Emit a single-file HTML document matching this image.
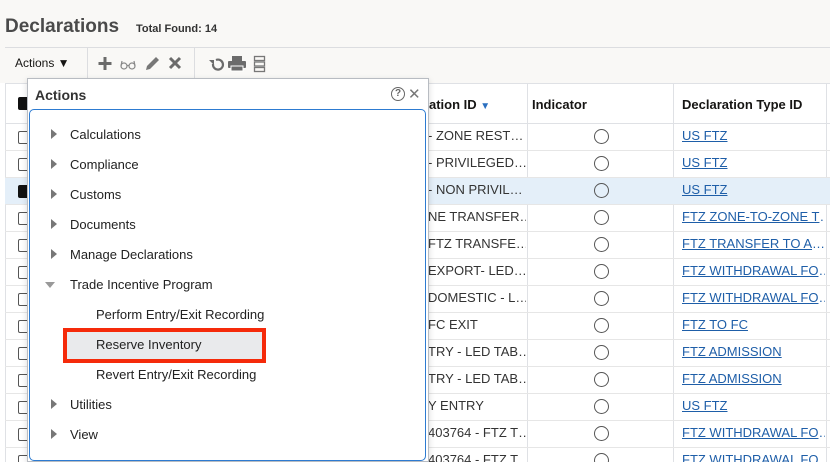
<!DOCTYPE html>
<html style="width:830px;height:462px;overflow:hidden"><head><style>
*{box-sizing:border-box;margin:0;padding:0}
body{width:830px;height:462px;overflow:hidden;background:#fff;font-family:"Liberation Sans",sans-serif;position:relative;color:#161513}
.a{position:absolute}
.hdr{left:0;top:0;width:830px;height:83px;background:#f9f8f6}
.row{left:5px;width:830px;height:27px;border-bottom:1px solid #e6e6e6}
.lnk{color:#1e5ea8;text-decoration:underline;font-size:13px;white-space:nowrap}
.circ{width:15px;height:15px;border:1.5px solid #555;border-radius:50%}
.cb{width:13px;height:13px;border:1px solid #555;border-radius:2px;background:#fff}
.vl{width:1px;background:#dfe1e5}
.mi{font-size:13px;color:#222;white-space:nowrap}
.tri{width:0;height:0;border-top:5px solid transparent;border-bottom:5px solid transparent;border-left:6px solid #777}
.d div{height:27px;width:98px;overflow:hidden;white-space:nowrap}
.l div{height:27px;width:143px;overflow:hidden;white-space:nowrap;color:#1e5ea8}
</style></head><body>
<div class="a hdr"></div>
<div class="a" style="left:5px;top:16px;font-size:19px;font-weight:bold;color:#4a4a4a">Declarations</div>
<div class="a" style="left:136px;top:23px;font-size:11px;font-weight:bold;color:#333">Total Found: 14</div>
<div class="a" style="left:5px;top:47px;width:825px;height:1px;background:#dcdde0"></div>
<div class="a" style="left:87px;top:48px;width:1px;height:30px;background:#dcdde0"></div>
<div class="a" style="left:194px;top:48px;width:1px;height:30px;background:#dcdde0"></div>
<div class="a" style="left:15px;top:56px;font-size:12px">Actions ▼</div>
<svg class="a" style="left:96px;top:55px" width="170" height="18" viewBox="0 0 170 18">
<path d="M9 2v13M2.5 8.5h13" stroke="#6b6b6b" stroke-width="3"/>
<g fill="none" stroke="#888" stroke-width="1.2"><circle cx="28" cy="11" r="3"/><circle cx="36" cy="11" r="3"/><path d="M31 10.5h2M25 11l1-5M39 11l-1-5"/></g>
<path d="M50 15l1-4 9-9 3 3-9 9z" fill="#777"/>
<path d="M74 3l10 10M84 3L74 13" stroke="#6b6b6b" stroke-width="3"/>
<path d="M120 5a5 5 0 1 1-3 4" fill="none" stroke="#6b6b6b" stroke-width="2.2"/><path d="M113 5l5 0 0 5z" fill="#6b6b6b"/>
<rect x="136" y="1" width="10" height="5" fill="#6b6b6b"/><rect x="132" y="6" width="18" height="7" rx="1" fill="#6b6b6b"/><rect x="135" y="11" width="12" height="5" fill="#6b6b6b" stroke="#fff" stroke-width="1"/>
<g fill="none" stroke="#777" stroke-width="1.3"><rect x="158.5" y="1.5" width="10" height="4"/><rect x="158.5" y="7" width="10" height="4"/><rect x="158.5" y="12.5" width="10" height="4"/></g>
</svg>

<div class="a" style="left:5px;top:83px;width:830px;height:41px;border-top:1px solid #dfe1e5;border-bottom:1px solid #dfe1e5;background:#fff"></div>
<div class="a" style="left:5px;top:83px;width:1px;height:379px;background:#dfe1e5"></div>
<div class="a vl" style="left:527px;top:83px;height:379px"></div>
<div class="a vl" style="left:673px;top:83px;height:379px"></div>
<div class="a vl" style="left:826px;top:83px;height:379px"></div>
<div class="a" style="left:18px;top:97px;width:13px;height:13px;background:#111;border-radius:2px"></div>
<div class="a" style="left:429px;top:97px;font-size:13px;font-weight:bold">ation ID <span style="color:#2a6fc0;font-size:10px">▼</span></div>
<div class="a" style="left:532px;top:97px;font-size:13px;font-weight:bold">Indicator</div>
<div class="a" style="left:682px;top:97px;font-size:13px;font-weight:bold">Declaration Type ID</div>

<div class="a row" style="top:124px"></div>
<div class="a row" style="top:151px"></div>
<div class="a row" style="top:178px;background:#e4eff9"></div>
<div class="a row" style="top:205px"></div>
<div class="a row" style="top:232px"></div>
<div class="a row" style="top:259px"></div>
<div class="a row" style="top:286px"></div>
<div class="a row" style="top:313px"></div>
<div class="a row" style="top:340px"></div>
<div class="a row" style="top:367px"></div>
<div class="a row" style="top:394px"></div>
<div class="a row" style="top:421px"></div>
<div class="a row" style="top:448px"></div>

<div class="a cb" style="left:18px;top:131px"></div>
<div class="a cb" style="left:18px;top:158px"></div>
<div class="a" style="left:18px;top:185px;width:13px;height:13px;background:#111;border-radius:2px"></div>
<div class="a cb" style="left:18px;top:212px"></div>
<div class="a cb" style="left:18px;top:239px"></div>
<div class="a cb" style="left:18px;top:266px"></div>
<div class="a cb" style="left:18px;top:293px"></div>
<div class="a cb" style="left:18px;top:320px"></div>
<div class="a cb" style="left:18px;top:347px"></div>
<div class="a cb" style="left:18px;top:374px"></div>
<div class="a cb" style="left:18px;top:401px"></div>
<div class="a cb" style="left:18px;top:428px"></div>
<div class="a cb" style="left:18px;top:455px"></div>

<div class="a d" style="left:428px;top:129px;line-height:14px;font-size:13px;color:#333">
<div>- ZONE REST…</div><div>- PRIVILEGED…</div><div>- NON PRIVIL…</div><div>NE TRANSFER…</div><div>FTZ TRANSFE…</div><div>EXPORT- LED…</div><div>DOMESTIC - L…</div><div>FC EXIT</div><div>TRY - LED TAB…</div><div>TRY - LED TAB…</div><div>Y ENTRY</div><div>403764 - FTZ T…</div><div>403764 - FTZ T…</div>
</div>
<div class="a" style="left:594px;top:129px">
<div class="circ"></div><div class="circ" style="margin-top:12px"></div><div class="circ" style="margin-top:12px"></div><div class="circ" style="margin-top:12px"></div><div class="circ" style="margin-top:12px"></div><div class="circ" style="margin-top:12px"></div><div class="circ" style="margin-top:12px"></div><div class="circ" style="margin-top:12px"></div><div class="circ" style="margin-top:12px"></div><div class="circ" style="margin-top:12px"></div><div class="circ" style="margin-top:12px"></div><div class="circ" style="margin-top:12px"></div><div class="circ" style="margin-top:12px"></div>
</div>
<div class="a l" style="left:682px;top:129px;line-height:14px;font-size:13px">
<div><span class="lnk">US FTZ</span></div><div><span class="lnk">US FTZ</span></div><div><span class="lnk">US FTZ</span></div><div><span class="lnk">FTZ ZONE-TO-ZONE T</span>…</div><div><span class="lnk">FTZ TRANSFER TO A</span>…</div><div><span class="lnk">FTZ WITHDRAWAL FO</span>…</div><div><span class="lnk">FTZ WITHDRAWAL FO</span>…</div><div><span class="lnk">FTZ TO FC</span></div><div><span class="lnk">FTZ ADMISSION</span></div><div><span class="lnk">FTZ ADMISSION</span></div><div><span class="lnk">US FTZ</span></div><div><span class="lnk">FTZ WITHDRAWAL FO</span>…</div><div><span class="lnk">FTZ WITHDRAWAL FO</span>…</div>
</div>

<div class="a" style="left:27px;top:78px;width:402px;height:384px;background:#fff;border:1px solid #b8bcc2;box-shadow:0 2px 6px rgba(0,0,0,.15)"></div>
<div class="a" style="left:35px;top:87px;font-size:14px;font-weight:bold;color:#333">Actions</div>
<div class="a" style="left:391px;top:87px;width:14px;height:14px;border:1.5px solid #666;border-radius:50%;font-size:10px;font-weight:bold;color:#666;text-align:center;line-height:11px">?</div>
<div class="a" style="left:408px;top:85px;font-size:15px;color:#777">✕</div>
<div class="a" style="left:29px;top:109px;width:397px;height:352px;border:1px solid #2d7bd1;border-radius:5px"></div>

<div class="a tri" style="left:51px;top:129px"></div><div class="a mi" style="left:70px;top:127px">Calculations</div>
<div class="a tri" style="left:51px;top:159px"></div><div class="a mi" style="left:70px;top:157px">Compliance</div>
<div class="a tri" style="left:51px;top:189px"></div><div class="a mi" style="left:70px;top:187px">Customs</div>
<div class="a tri" style="left:51px;top:219px"></div><div class="a mi" style="left:70px;top:217px">Documents</div>
<div class="a tri" style="left:51px;top:249px"></div><div class="a mi" style="left:70px;top:247px">Manage Declarations</div>
<div class="a" style="left:45px;top:282px;width:0;height:0;border-left:5px solid transparent;border-right:5px solid transparent;border-top:6px solid #999"></div><div class="a mi" style="left:70px;top:277px">Trade Incentive Program</div>
<div class="a mi" style="left:96px;top:307px">Perform Entry/Exit Recording</div>
<div class="a" style="left:63px;top:328px;width:203px;height:35px;border:4px solid #f52a0a;background:#e9eaec"></div>
<div class="a mi" style="left:96px;top:337px">Reserve Inventory</div>
<div class="a mi" style="left:96px;top:367px">Revert Entry/Exit Recording</div>
<div class="a tri" style="left:51px;top:399px"></div><div class="a mi" style="left:70px;top:397px">Utilities</div>
<div class="a tri" style="left:51px;top:429px"></div><div class="a mi" style="left:70px;top:427px">View</div>
</body></html>
